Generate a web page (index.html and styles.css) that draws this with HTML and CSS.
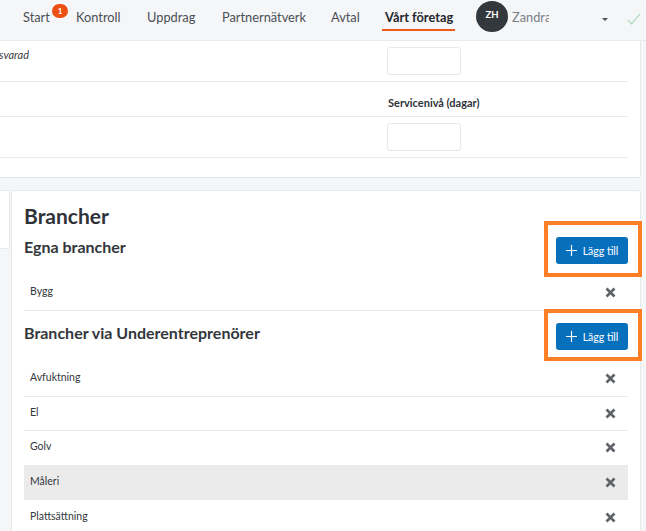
FILE: index.html
```html
<!DOCTYPE html>
<html lang="sv">
<head>
<meta charset="utf-8">
<title>Vårt företag</title>
<link rel="stylesheet" href="styles.css">
</head>
<body>
<nav class="nav">
  <a class="nav-item start">Start<span class="badge">1</span></a>
  <a class="nav-item kontroll">Kontroll</a>
  <a class="nav-item uppdrag">Uppdrag</a>
  <a class="nav-item partner">Partnernätverk</a>
  <a class="nav-item avtal">Avtal</a>
  <a class="nav-item active">Vårt företag</a>
  <span class="avatar">ZH</span>
  <span class="user">Zandra</span>
  <span class="caret"></span>
  <svg class="check" width="14" height="12" viewBox="0 0 14 12"><path d="M1 7l3.5 4L13 1" fill="none" stroke="#9ed4ae" stroke-width="1.1"/></svg>
</nav>

<section class="top-panel">
  <div class="top-row tall"><div class="clip"><div class="cut"><em>Obesvarad</em></div></div><div class="input"></div></div>
  <div class="top-row short"><div class="clip"></div><strong class="label">Servicenivå (dagar)</strong></div>
  <div class="top-row tall"><div class="clip"></div><div class="input"></div></div>
  <div class="top-row end"></div>
</section>

<main class="lower">
  <aside class="side"></aside>
  <section class="card">
    <h1 class="title">Brancher</h1>
    <div class="head-row first">
      <h2 class="sub">Egna brancher</h2>
      <button class="add"><svg width="11" height="11" viewBox="0 0 11 11"><path d="M5.5 0v11M0 5.5h11" stroke="#fff" stroke-width="1.2"/></svg>Lägg till</button>
    </div>
    <div class="item bygg"><span>Bygg</span><svg class="x" width="11" height="11" viewBox="0 0 11 11"><path d="M1.5 1.5l8 8M9.5 1.5l-8 8" stroke="#5f6368" stroke-width="2.6"/></svg></div>
    <div class="head-row second">
      <h2 class="sub">Brancher via Underentreprenörer</h2>
      <button class="add"><svg width="11" height="11" viewBox="0 0 11 11"><path d="M5.5 0v11M0 5.5h11" stroke="#fff" stroke-width="1.2"/></svg>Lägg till</button>
    </div>
    <div class="item"><span>Avfuktning</span><svg class="x" width="11" height="11" viewBox="0 0 11 11"><path d="M1.5 1.5l8 8M9.5 1.5l-8 8" stroke="#5f6368" stroke-width="2.6"/></svg></div>
    <div class="item"><span>El</span><svg class="x" width="11" height="11" viewBox="0 0 11 11"><path d="M1.5 1.5l8 8M9.5 1.5l-8 8" stroke="#5f6368" stroke-width="2.6"/></svg></div>
    <div class="item"><span>Golv</span><svg class="x" width="11" height="11" viewBox="0 0 11 11"><path d="M1.5 1.5l8 8M9.5 1.5l-8 8" stroke="#5f6368" stroke-width="2.6"/></svg></div>
    <div class="item hover"><span>Måleri</span><svg class="x" width="11" height="11" viewBox="0 0 11 11"><path d="M1.5 1.5l8 8M9.5 1.5l-8 8" stroke="#5f6368" stroke-width="2.6"/></svg></div>
    <div class="item"><span>Plattsättning</span><svg class="x" width="11" height="11" viewBox="0 0 11 11"><path d="M1.5 1.5l8 8M9.5 1.5l-8 8" stroke="#5f6368" stroke-width="2.6"/></svg></div>
  </section>
</main>

<div class="mark mark-one"></div>
<div class="mark mark-two"></div>
</body>
</html>
```

FILE: styles.css
```css
* { box-sizing: border-box; }
html, body { margin: 0; height: 531px; overflow: hidden; }
body {
  background: #f5f6f8;
  font-family: Lato, "Noto Sans", sans-serif;
  color: #2f3338;
  position: relative;
}
.nav {
  display: flex;
  align-items: flex-start;
  height: 40px;
  margin-top: 1px;
  border-bottom: 1px solid #e8eaed;
  background: #f5f6f8;
  font-size: 12.8px;
  color: #4a4f55;
  padding-left: 23px;
}
.nav-item { display: block; position: relative; white-space: nowrap; line-height: 33px; }
.start { width: 53px; }
.kontroll { width: 71px; }
.uppdrag { width: 75px; }
.partner { width: 109px; }
.avtal { width: 51px; }
.active {
  width: 73px;
  padding: 5px 3px 0;
  font-weight: 700;
  color: #24272b;
  border-bottom: 2px solid #ee5a1c;
  margin-right: 21px;
  line-height: 22px;
  height: 30px;
}
.badge {
  position: absolute;
  left: 29px;
  top: 3px;
  width: 16px;
  height: 14px;
  border-radius: 8px;
  background: #ee4f12;
  color: #fff;
  font-size: 8px;
  font-weight: 700;
  line-height: 14px;
  text-align: center;
}
.avatar {
  width: 32px;
  height: 31px;
  border-radius: 50%;
  background: #33383d;
  color: #fff;
  font-size: 9.5px;
  font-weight: 700;
  text-align: center;
  line-height: 28px;
  flex: none;
}
.user { width: 37px; margin-left: 4px; overflow: hidden; color: #7a7f85; white-space: nowrap; line-height: 33px; }
.caret {
  margin-left: 53px;
  margin-top: 17px;
  border: 3px solid transparent;
  border-top: 3px solid #4a4f55;
  border-bottom: 0;
  width: 0;
  height: 0;
}
.check { margin-left: 19px; margin-top: 12px; flex: none; }

.top-panel {
  width: 641px;
  background: #fff;
  border-right: 1px solid #e8eaed;
  border-bottom: 1px solid #e3e5e8;
  border-bottom-right-radius: 3px;
  padding-right: 12px;
}
.top-row {
  display: flex;
  align-items: center;
  border-bottom: 1px solid #e8eaed;
}
.tall { height: 41px; }
.short { height: 35px; }
.end { height: 19px; border-bottom: 0; }
.clip {
  width: 387px;
  flex: none;
  align-self: flex-start;
  font-size: 11px;
  line-height: 14px;
  padding-top: 7px;
}
.cut {
  width: 29px;
  display: flex;
  justify-content: flex-end;
  overflow: hidden;
  white-space: nowrap;
}
.cut em { color: #3c4045; flex: none; }
.input {
  width: 74px;
  height: 28px;
  border: 1px solid #e6e8eb;
  border-radius: 3px;
  background: #fff;
}
.label { font-size: 11px; font-weight: 700; color: #2f3338; margin: 6px 0 0 1px; }

.lower { display: flex; align-items: flex-start; gap: 1px; margin-top: 12px; }
.side {
  width: 10px;
  height: 59px;
  background: #fff;
  border: 1px solid #e8eaed;
  border-left: 0;
  border-bottom-right-radius: 3px;
  flex: none;
}
.card {
  width: 630px;
  height: 341px;
  background: #fff;
  border: 1px solid #e8eaed;
  border-bottom: 0;
  border-radius: 3px 3px 0 0;
  padding: 11px 12px 0;
  overflow: hidden;
}
.title { margin: 0 0 2px; font-size: 21px; font-weight: 700; line-height: 27px; color: #2f3338; }
.sub { margin: 0; font-size: 16px; font-weight: 700; color: #33373c; }
.head-row { display: flex; justify-content: space-between; align-items: flex-start; }
.first { height: 44px; }
.first .sub { line-height: 25px; margin-top: 3px; }
.first .add { margin-top: 6px; }
.second { height: 51px; padding-top: 12px; }
.second .sub { line-height: 22px; margin-top: -1px; }
.add {
  width: 72px;
  height: 27px;
  display: flex;
  align-items: center;
  justify-content: center;
  gap: 6px;
  padding: 0;
  border: 0;
  border-radius: 3px;
  background: #0670bd;
  color: #fff;
  font-family: inherit;
  font-size: 10.5px;
}
.item {
  display: flex;
  justify-content: space-between;
  align-items: center;
  height: 34.5px;
  padding: 0 12px 0 6px;
  border-bottom: 1px solid #e8eaed;
  font-size: 10.5px;
  color: #33373c;
}
.item span { margin-top: -3px; }
.bygg { height: 36px; }
.bygg span { margin-top: -4px; }
.item:last-child { border-bottom: 0; }
.hover { background: #ebebeb; }
.x { flex: none; }

.mark {
  position: absolute;
  left: 544px;
  width: 98px;
  border: 4px solid #ff7f27;
}
.mark-one { top: 221px; height: 56px; }
.mark-two { top: 309px; height: 52px; }
```
